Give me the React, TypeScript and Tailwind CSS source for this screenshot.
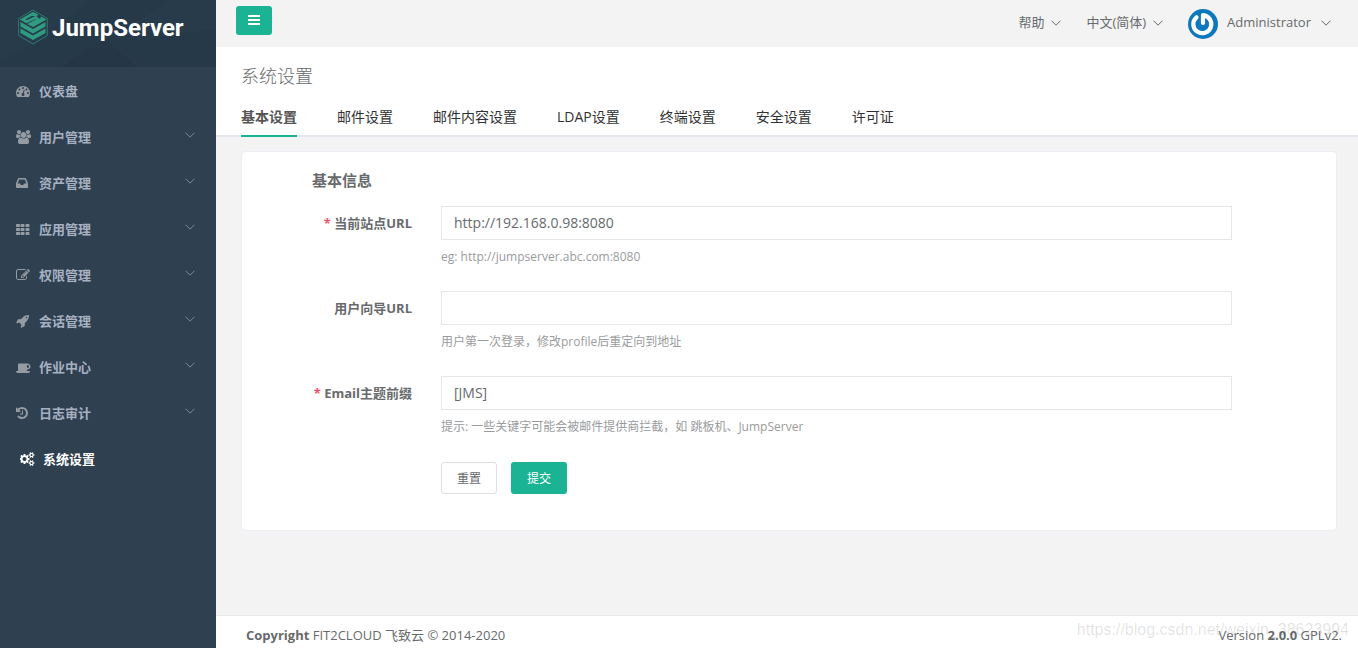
import React, { useState } from 'react';

interface IconProps {
    path: string;
    width?: number;
    className?: string;
}

// Glyphs are drawn on a 1792 unit em, some of them are wider than that
const Icon: React.FC<IconProps> = ({ path, width = 1792, className = '' }) => (
    <svg viewBox={`0 0 ${width} 1792`} className={`h-[14px] shrink-0 ${className}`} fill="currentColor" aria-hidden="true">
        <path d={path} />
    </svg>
);

const Chevron: React.FC<{ className?: string }> = ({ className = '' }) => (
    <svg viewBox="0 0 10 6" className={`h-[6px] w-[10px] shrink-0 ${className}`} fill="none" stroke="currentColor" aria-hidden="true">
        <path d="M0.5 0.7 L5 5.2 L9.5 0.7" />
    </svg>
);

const icons = {
    dashboard: 'M384 1152q0-53-37.5-90.5t-90.5-37.5-90.5 37.5-37.5 90.5 37.5 90.5 90.5 37.5 90.5-37.5 37.5-90.5zm192-448q0-53-37.5-90.5t-90.5-37.5-90.5 37.5-37.5 90.5 37.5 90.5 90.5 37.5 90.5-37.5 37.5-90.5zm428 481l101-382q6-26-7.5-48.5t-38.5-29.5-48 6.5-30 39.5l-101 382q-60 5-107 43.5t-63 98.5q-20 77 20 146t117 89 146-20 89-117q16-60-6-117t-72-91zm660-33q0-53-37.5-90.5t-90.5-37.5-90.5 37.5-37.5 90.5 37.5 90.5 90.5 37.5 90.5-37.5 37.5-90.5zm-640-640q0-53-37.5-90.5t-90.5-37.5-90.5 37.5-37.5 90.5 37.5 90.5 90.5 37.5 90.5-37.5 37.5-90.5zm448 192q0-53-37.5-90.5t-90.5-37.5-90.5 37.5-37.5 90.5 37.5 90.5 90.5 37.5 90.5-37.5 37.5-90.5zm320 448q0 261-141 483-19 29-54 29h-1402q-35 0-54-29-141-221-141-483 0-182 71-348t191-286 286-191 348-71 348 71 286 191 191 286 71 348z',
    users: 'M593 896q-162 5-265 128h-134q-82 0-138-40.5t-56-118.5q0-353 124-353 6 0 43.5 21t97.5 42.5 119 21.5q67 0 133-23-5 37-5 66 0 139 81 256zm1071 637q0 120-73 189.5t-194 69.5h-874q-121 0-194-69.5t-73-189.5q0-53 3.5-103.5t14-109 26.5-108.5 43-97.5 62-81 85.5-53.5 111.5-20q10 0 43 21.5t73 48 107 48 135 21.5 135-21.5 107-48 73-48 43-21.5q61 0 111.5 20t85.5 53.5 62 81 43 97.5 26.5 108.5 14 109 3.5 103.5zm-1024-1277q0 106-75 181t-181 75-181-75-75-181 75-181 181-75 181 75 75 181zm704 384q0 159-112.5 271.5t-271.5 112.5-271.5-112.5-112.5-271.5 112.5-271.5 271.5-112.5 271.5 112.5 112.5 271.5zm576 225q0 78-56 118.5t-138 40.5h-134q-103-123-265-128 81-117 81-256 0-29-5-66 66 23 133 23 59 0 119-21.5t97.5-42.5 43.5-21q124 0 124 353zm-128-609q0 106-75 181t-181 75-181-75-75-181 75-181 181-75 181 75 75 181z',
    inbox: 'M1024 960h316q-1-3-2.5-8.5t-2.5-7.5l-212-496h-708l-212 496q-1 3-2.5 8.5t-2.5 7.5h316l95 192h320zm512 30v482q0 26-19 45t-45 19h-1408q-26 0-45-19t-19-45v-482q0-62 25-123l238-552q10-25 36.5-42t52.5-17h832q26 0 52.5 17t36.5 42l238 552q25 61 25 123z',
    grid: 'M96 256h320q96 0 96 96v192q0 96-96 96h-320q-96 0-96-96v-192q0-96 96-96zM672 256h320q96 0 96 96v192q0 96-96 96h-320q-96 0-96-96v-192q0-96 96-96zM1312 256h320q96 0 96 96v192q0 96-96 96h-320q-96 0-96-96v-192q0-96 96-96zM96 768h320q96 0 96 96v192q0 96-96 96h-320q-96 0-96-96v-192q0-96 96-96zM672 768h320q96 0 96 96v192q0 96-96 96h-320q-96 0-96-96v-192q0-96 96-96zM1312 768h320q96 0 96 96v192q0 96-96 96h-320q-96 0-96-96v-192q0-96 96-96zM96 1280h320q96 0 96 96v192q0 96-96 96h-320q-96 0-96-96v-192q0-96 96-96zM672 1280h320q96 0 96 96v192q0 96-96 96h-320q-96 0-96-96v-192q0-96 96-96zM1312 1280h320q96 0 96 96v192q0 96-96 96h-320q-96 0-96-96v-192q0-96 96-96z',
    edit: 'M888 1184l116-116-152-152-116 116v56h96v96h56zm440-720q-16-16-33 1l-350 350q-17 17-1 33t33-1l350-350q17-17 1-33zm80 594v190q0 119-84.5 203.5t-203.5 84.5h-832q-119 0-203.5-84.5t-84.5-203.5v-832q0-119 84.5-203.5t203.5-84.5h832q63 0 117 25 15 7 18 23 3 17-9 29l-49 49q-14 14-32 8-23-6-45-6h-832q-66 0-113 47t-47 113v832q0 66 47 113t113 47h832q66 0 113-47t47-113v-126q0-13 9-22l64-64q15-15 35-7t20 29zm-96-738l288 288-672 672h-288v-288zm444 132l-92 92-288-288 92-92q28-28 68-28t68 28l152 152q28 28 28 68t-28 68z',
    rocket: 'M1440 448q0-40-28-68t-68-28-68 28-28 68 28 68 68 28 68-28 28-68zm224-288q0 249-75.5 430.5t-253.5 360.5q-81 80-195 176l-20 379q-2 16-16 26l-384 224q-7 4-16 4-12 0-23-9l-64-64q-13-14-8-32l85-276-281-281-276 85q-3 1-9 1-14 0-23-9l-64-64q-17-19-5-39l224-384q10-14 26-16l379-20q96-114 176-195 188-187 358-258t431-71q14 0 24 9.5t10 22.5z',
    coffee: 'M1664 832q0-80-56-136t-136-56h-64v384h64q80 0 136-56t56-136zm-1664 576h1792q0 106-75 181t-181 75h-1280q-106 0-181-75t-75-181zm1856-576q0 159-112.5 271.5t-271.5 112.5h-64v32q0 92-66 158t-158 66h-704q-92 0-158-66t-66-158v-736q0-26 19-45t45-19h1152q159 0 271.5 112.5t112.5 271.5z',
    history: 'M1536 896q0 156-61 298t-164 245-245 164-298 61q-172 0-327-72.5t-264-204.5q-7-10-6.5-22.5t8.5-20.5l137-138q10-9 25-9 16 2 23 12 73 95 179 147t225 52q104 0 198.5-40.5t163.5-109.5 109.5-163.5 40.5-198.5-40.5-198.5-109.5-163.5-163.5-109.5-198.5-40.5q-98 0-188 35.5t-160 101.5l137 138q31 30 14 69-17 40-59 40h-448q-26 0-45-19t-19-45v-448q0-42 40-59 39-17 69 14l130 129q107-101 244.5-156.5t284.5-55.5q156 0 298 61t245 164 164 245 61 298zm-640-288v448q0 14-9 23t-23 9h-320q-14 0-23-9t-9-23v-64q0-14 9-23t23-9h224v-352q0-14 9-23t23-9h64q14 0 23 9t9 23z',
    cogs: 'M832 896q0-106-75-181t-181-75-181 75-75 181 75 181 181 75 181-75 75-181zm768 512q0-52-38-90t-90-38-90 38-38 90q0 53 37.5 90.5t90.5 37.5 90.5-37.5 37.5-90.5zm0-1024q0-52-38-90t-90-38-90 38-38 90q0 53 37.5 90.5t90.5 37.5 90.5-37.5 37.5-90.5zm-384 421v185q0 10-7 19.5t-16 10.5l-155 24q-11 35-32 76 34 48 90 115 7 11 7 20 0 12-7 19-23 30-82.5 89.5t-78.5 59.5q-11 0-21-7l-115-90q-37 19-77 31-11 108-23 155-7 24-30 24h-186q-11 0-20-7.5t-10-17.5l-23-153q-34-10-75-31l-118 89q-7 7-20 7-11 0-21-8-144-133-144-160 0-9 7-19 10-14 41-53t47-61q-23-44-35-82l-152-24q-10-1-17-9.5t-7-19.5v-185q0-10 7-19.5t16-10.5l155-24q11-35 32-76-34-48-90-115-7-11-7-20 0-12 7-20 22-30 82-89t79-59q11 0 21 7l115 90q34-18 77-32 11-108 23-154 7-24 30-24h186q11 0 20 7.5t10 17.5l23 153q34 10 75 31l118-89q8-7 20-7 11 0 21 8 144 133 144 160 0 8-7 19-12 16-42 54t-45 60q23 48 34 82l152 23q10 2 17 10.5t7 19.5zm640 533v140q0 16-149 31-12 27-30 52 51 113 51 138 0 4-4 7-122 71-124 71-8 0-46-47t-52-68q-20 2-30 2t-30-2q-14 21-52 68t-46 47q-2 0-124-71-4-3-4-7 0-25 51-138-18-25-30-52-149-15-149-31v-140q0-16 149-31 13-29 30-52-51-113-51-138 0-4 4-7 4-2 35-20t59-34 30-16q8 0 46 46.5t52 67.5q20-2 30-2t30 2q51-71 92-112l6-2q4 0 124 70 4 3 4 7 0 25-51 138 17 23 30 52 149 15 149 31zm0-1024v140q0 16-149 31-12 27-30 52 51 113 51 138 0 4-4 7-122 71-124 71-8 0-46-47t-52-68q-20 2-30 2t-30-2q-14 21-52 68t-46 47q-2 0-124-71-4-3-4-7 0-25 51-138-18-25-30-52-149-15-149-31v-140q0-16 149-31 13-29 30-52-51-113-51-138 0-4 4-7 4-2 35-20t59-34 30-16q8 0 46 46.5t52 67.5q20-2 30-2t30 2q51-71 92-112l6-2q4 0 124 70 4 3 4 7 0 25-51 138 17 23 30 52 149 15 149 31z',
    bars: 'M64 256h1408q64 0 64 64v128q0 64-64 64h-1408q-64 0-64-64v-128q0-64 64-64zM64 768h1408q64 0 64 64v128q0 64-64 64h-1408q-64 0-64-64v-128q0-64 64-64zM64 1280h1408q64 0 64 64v128q0 64-64 64h-1408q-64 0-64-64v-128q0-64 64-64z',
};

const menu = [
    { label: '仪表盘', icon: icons.dashboard, width: 1792, children: false },
    { label: '用户管理', icon: icons.users, width: 1920, children: true },
    { label: '资产管理', icon: icons.inbox, width: 1536, children: true },
    { label: '应用管理', icon: icons.grid, width: 1728, children: true },
    { label: '权限管理', icon: icons.edit, width: 1792, children: true },
    { label: '会话管理', icon: icons.rocket, width: 1664, children: true },
    { label: '作业中心', icon: icons.coffee, width: 1920, children: true },
    { label: '日志审计', icon: icons.history, width: 1536, children: true },
    { label: '系统设置', icon: icons.cogs, width: 1920, children: false, active: true },
];

const tabs = ['基本设置', '邮件设置', '邮件内容设置', 'LDAP设置', '终端设置', '安全设置', '许可证'];

const Logo = () => (
    <a href="#" className="relative flex h-[67px] items-start overflow-hidden bg-[#263949] pl-[18px] pt-[9px]">
        <svg viewBox="0 0 216 67" className="absolute inset-0 h-full w-full" aria-hidden="true">
            <path d="M0 0h90L40 40 0 60z" fill="#283b4b" />
            <path d="M110 40L170 0h46v30z" fill="#283b4b" />
            <path d="M106 40l30 27H60z" fill="#253747" />
        </svg>
        <svg viewBox="0 0 30 36" className="relative h-9 w-[30px]" fill="none" aria-hidden="true">
            <path d="M15 1L29.3 9.5v17L15 35 .7 26.5v-17z" stroke="#2b7d72" />
            <path d="M19.5 6.5L15 4.5 4.500 10.500 8.500 12.700 17.500 8.500 20.500 10.500 12 15 15 16.500 25.800 10.500 22.500 8.700" stroke="#2f9c82" strokeWidth="2.6" />
            <path d="M2.5 13L15 20l12.500-7v4.500L15 24.500 2.500 17.500z" fill="#2f9c82" />
            <path d="M2.5 19.500L15 26.500l12.500-7V24L15 31 2.500 24z" fill="#2f9c82" />
        </svg>
        <span className="relative ml-1 font-['Roboto','Open_Sans',sans-serif] text-2xl leading-[38px] font-bold text-white">JumpServer</span>
    </a>
);

const Sidebar = () => (
    <aside className="w-[216px] shrink-0 bg-[#2f4050]">
        <Logo />
        <nav className="pt-0.5">
            {menu.map((item) => (
                <a
                    key={item.label}
                    href="#"
                    className={`flex h-[46px] items-center pr-[21px] text-[13px] font-bold ${item.active ? 'pl-5 text-white' : 'pl-4 text-[#a7b1c2]'}`}
                >
                    <span className={`mb-0.5 flex w-[23px] ${item.active ? '' : 'text-[#949ba2]'}`}>
                        <Icon path={item.icon} width={item.width} />
                    </span>
                    <span className="flex-1">{item.label}</span>
                    {item.children && <Chevron className="mb-1.5 text-[#7f8993]" />}
                </a>
            ))}
        </nav>
    </aside>
);

const Topbar = () => (
    <header className="flex h-[47px] items-start justify-between pl-5 pr-[27px] text-[13px] text-[#676a6c]">
        <button aria-label="菜单" className="mt-1.5 flex h-[29px] w-9 items-center justify-center rounded-[3px] bg-[#1ab394] text-white">
            <Icon path={icons.bars} width={1536} className="mb-0.5 h-[13px]" />
        </button>
        <div className="flex h-[45px] items-center">
            <button className="flex items-center gap-[7px]">帮助 <Chevron /></button>
            <button className="ml-[25px] flex items-center gap-[7px]">中文(简体) <Chevron /></button>
            <button className="ml-[25px] flex items-center">
                <svg viewBox="0 0 30 30" className="mt-0.5 mr-[9px] size-[30px]" fill="none" aria-hidden="true">
                    <circle cx="15" cy="15" r="15" fill="#0c78be" />
                    <path d="M8.500 8.300A9 9 0 1 0 15 6.200V14" stroke="#fff" strokeWidth="4.200" strokeLinecap="round" strokeLinejoin="round" />
                </svg>
                Administrator <Chevron className="ml-2.5" />
            </button>
        </div>
    </header>
);

interface FieldProps {
    id: string;
    label: string;
    help: string;
    value?: string;
    required?: boolean;
}

const Field: React.FC<FieldProps> = ({ id, label, help, value = '', required }) => (
    <div className="flex h-[85px] gap-[29px]">
        <label htmlFor={id} className="w-[100px] shrink-0 text-right text-[13px] leading-[34px] font-bold">
            {required && <span className="text-[#ed5565]">* </span>}
            {label}
        </label>
        <div className="min-w-0 flex-1">
            <input
                id={id}
                type="text"
                defaultValue={value}
                className="block h-[34px] w-full border border-[#e5e6e7] bg-white px-3 pb-0.5 text-sm outline-none focus:border-[#1ab394]"
            />
            <p className="mt-[7px] text-xs leading-5 text-[#999b9d]">{help}</p>
        </div>
    </div>
);

const App = () => {
    const [tab, setTab] = useState(tabs[0]);

    return (
        <div className="flex min-h-screen bg-[#f3f3f3] font-['Open_Sans','Noto_Sans_CJK_SC',sans-serif] text-[13px] text-[#676a6c]">
            <Sidebar />
            <div className="flex min-w-0 flex-1 flex-col">
                <Topbar />
                <div className="border-b-2 border-[#e4e7ed] bg-white px-[25px] pt-[17px]">
                    <h2 className="text-lg leading-6 font-light">系统设置</h2>
                    <div className="-mb-0.5 mt-[10px] flex gap-10">
                        {tabs.map((t) => (
                            <button
                                key={t}
                                onClick={() => setTab(t)}
                                className={`h-[39px] border-b-2 text-sm whitespace-nowrap ${t === tab ? 'border-[#1ab394] font-semibold text-[#555]' : 'border-transparent text-[#303133]'}`}
                            >
                                {t}
                            </button>
                        ))}
                    </div>
                </div>

                <main className="flex-1 px-[25px] pt-3.5 pr-[21px]">
                    <form
                        onSubmit={(e) => e.preventDefault()}
                        className="rounded border border-[#ebeef5] bg-white pt-[17px] pr-[104px] pb-9 pl-[70px]"
                    >
                        <h3 className="mb-[15px] text-[15px] leading-[22px] font-semibold">基本信息</h3>
                        <Field id="site-url" label="当前站点URL" value="http://192.168.0.98:8080" help="eg: http://jumpserver.abc.com:8080" required />
                        <Field id="guide-url" label="用户向导URL" help="用户第一次登录，修改profile后重定向到地址" />
                        <Field id="email-prefix" label="Email主题前缀" value="[JMS]" help="提示: 一些关键字可能会被邮件提供商拦截，如 跳板机、JumpServer" required />
                        <div className="mt-px flex gap-3.5 pl-[129px] text-xs">
                            <button type="reset" className="h-8 w-14 rounded-[3px] border border-[#dcdfe6] bg-white pt-0.5">重置</button>
                            <button type="submit" className="h-8 w-14 rounded-[3px] bg-[#1ab394] pt-0.5 text-white">提交</button>
                        </div>
                    </form>
                </main>

                <footer className="relative flex h-[33px] items-center justify-between border-t border-[#e7eaec] bg-white pl-[30px] pr-4 pt-2">
                    <div><strong>Copyright</strong> FIT2CLOUD 飞致云 © 2014-2020</div>
                    <div>Version <strong>2.0.0</strong> GPLv2.</div>
                    <span className="pointer-events-none absolute right-[9px] top-0.5 font-['Liberation_Sans',sans-serif] text-base leading-6 text-black/12">
                        https://blog.csdn.net/weixin_38623994
                    </span>
                </footer>
            </div>
        </div>
    );
};

export default App;
